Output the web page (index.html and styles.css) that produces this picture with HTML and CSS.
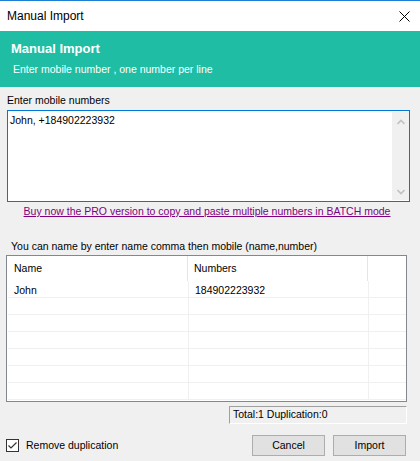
FILE: index.html
```html
<!DOCTYPE html>
<html>
<head>
<meta charset="utf-8">
<link rel="stylesheet" href="styles.css">
</head>
<body>
<div class="window">
  <div class="titlebar">
    <span class="title">Manual Import</span>
    <svg class="close" width="11" height="11" viewBox="0 0 11 11"><path d="M0.5 0.5L10.5 10.5M10.5 0.5L0.5 10.5" stroke="#000" stroke-width="1" fill="none"/></svg>
  </div>
  <div class="banner">
    <div class="banner-title">Manual Import</div>
    <div class="banner-sub">Enter mobile number , one number per line</div>
  </div>
  <div class="label">Enter mobile numbers</div>
  <div class="textbox">
    <div class="textbox-text">John, +184902223932</div>
    <div class="scrollbar">
      <svg width="8" height="6" viewBox="0 0 8 6"><path d="M0.5 5L4 1.5L7.5 5" stroke="#c2c2c2" stroke-width="1.6" fill="none"/></svg>
      <svg width="8" height="6" viewBox="0 0 8 6"><path d="M0.5 1L4 4.5L7.5 1" stroke="#c2c2c2" stroke-width="1.6" fill="none"/></svg>
    </div>
  </div>
  <div class="link-row"><a class="promo">Buy now the PRO version to copy and paste multiple numbers in BATCH mode</a></div>
  <div class="hint">You can name by enter name comma then mobile (name,number)</div>
  <div class="list">
    <div class="list-head">
      <div class="hcell c1">Name</div>
      <div class="hcell c2">Numbers</div>
      <div class="hcell c3"></div>
    </div>
    <div class="row"><div class="cell c1">John</div><div class="cell c2">184902223932</div><div class="cell c3"></div></div>
    <div class="row"><div class="cell c1"></div><div class="cell c2"></div><div class="cell c3"></div></div>
    <div class="row"><div class="cell c1"></div><div class="cell c2"></div><div class="cell c3"></div></div>
    <div class="row"><div class="cell c1"></div><div class="cell c2"></div><div class="cell c3"></div></div>
    <div class="row"><div class="cell c1"></div><div class="cell c2"></div><div class="cell c3"></div></div>
    <div class="row"><div class="cell c1"></div><div class="cell c2"></div><div class="cell c3"></div></div>
    <div class="row"><div class="cell c1"></div><div class="cell c2"></div><div class="cell c3"></div></div>
  </div>
  <div class="status-row"><div class="status">Total:1 Duplication:0</div></div>
  <div class="footer">
    <span class="checkbox"><svg width="13" height="13" viewBox="0 0 13 13"><rect x="0.5" y="0.5" width="12" height="12" fill="#fff" stroke="#333"/><path d="M2.5 6.5L5 9L10.5 3.5" stroke="#333" stroke-width="1.2" fill="none"/></svg></span>
    <span class="check-label">Remove duplication</span>
    <span class="btn btn-cancel">Cancel</span>
    <span class="btn btn-import">Import</span>
  </div>
</div>
</body>
</html>
```
FILE: styles.css
```css
html, body {
  margin: 0;
  padding: 0;
}
body {
  width: 420px;
  height: 461px;
  overflow: hidden;
  background: #f0f0f0;
  font-family: "Liberation Sans", Arial, sans-serif;
  font-size: 10.5px;
  line-height: 13px;
  color: #000;
}
.window {
  border-top: 1px solid #1c7fd6;
  height: 460px;
}
.titlebar {
  height: 30px;
  background: #fff;
  display: flex;
  align-items: center;
  justify-content: space-between;
  padding: 0 10px 0 7px;
}
.title {
  font-size: 12px;
  line-height: 14px;
}
.close {
  display: block;
}
.banner {
  height: 56px;
  box-sizing: border-box;
  background: #1fbea4;
  color: #fff;
  padding: 10px 0 0 11px;
}
.banner-title {
  font-weight: bold;
  font-size: 13px;
  line-height: 15px;
}
.banner-sub {
  margin-top: 7px;
  padding-left: 2px;
}
.label {
  margin: 7px 0 0 7px;
}
.textbox {
  margin: 3px 0 0 7px;
  width: 403px;
  height: 92px;
  box-sizing: border-box;
  border: 1px solid #0078d7;
  background: #fff;
  display: flex;
}
.textbox-text {
  flex: 1;
  padding: 3px 0 0 2px;
}
.scrollbar {
  width: 17px;
  margin: 1px 0;
  background: #f0f0f0;
  display: flex;
  flex-direction: column;
  align-items: center;
  justify-content: space-between;
  padding: 7px 0 5px;
  box-sizing: border-box;
}
.scrollbar svg {
  display: block;
}
.link-row {
  margin-top: 3px;
  padding: 0 6px 0 0;
  text-align: center;
}
.promo {
  color: #800080;
  text-decoration: underline;
}
.hint {
  margin: 22px 0 0 11px;
}
.list {
  margin: 2px 0 0 6px;
  width: 401px;
  height: 147px;
  box-sizing: border-box;
  border: 1px solid #828790;
  background: #fff;
}
.list-head {
  height: 25px;
  display: flex;
  align-items: center;
}
.hcell {
  height: 25px;
  box-sizing: border-box;
  display: flex;
  align-items: center;
}
.hcell.c1 {
  width: 181px;
  padding-left: 7px;
  border-right: 1px solid #e5e5e5;
}
.hcell.c2 {
  width: 180px;
  padding-left: 6px;
  border-right: 1px solid #e5e5e5;
}
.hcell.c3 {
  flex: 1;
}
.row {
  margin-left: 1px;
  height: 17px;
  box-sizing: border-box;
  border-bottom: 1px solid #f0f0f0;
  display: flex;
}
.cell {
  height: 16px;
  box-sizing: border-box;
  padding-top: 3px;
}
.cell.c1 {
  width: 180px;
  padding-left: 6px;
}
.cell.c2 {
  width: 180px;
  border-left: 1px solid #f0f0f0;
  padding-left: 6px;
}
.cell.c3 {
  flex: 1;
  border-left: 1px solid #f0f0f0;
}
.status-row {
  margin-top: 4px;
}
.status {
  margin-left: 229px;
  width: 178px;
  height: 18px;
  box-sizing: border-box;
  border-top: 1px solid #a0a0a0;
  border-left: 1px solid #a0a0a0;
  border-bottom: 1px solid #fff;
  border-right: 1px solid #fff;
  padding: 1px 0 0 3px;
}
.footer {
  margin-top: 11px;
  height: 21px;
  display: flex;
  align-items: center;
  padding: 0 14px 0 6px;
}
.checkbox {
  width: 13px;
  height: 13px;
  display: block;
}
.checkbox svg {
  display: block;
}
.check-label {
  margin-left: 7px;
}
.btn {
  width: 73px;
  height: 21px;
  box-sizing: border-box;
  border: 1px solid #adadad;
  background: #e1e1e1;
  display: flex;
  align-items: center;
  justify-content: center;
}
.btn-cancel {
  margin-left: auto;
}
.btn-import {
  margin-left: 8px;
}
```
